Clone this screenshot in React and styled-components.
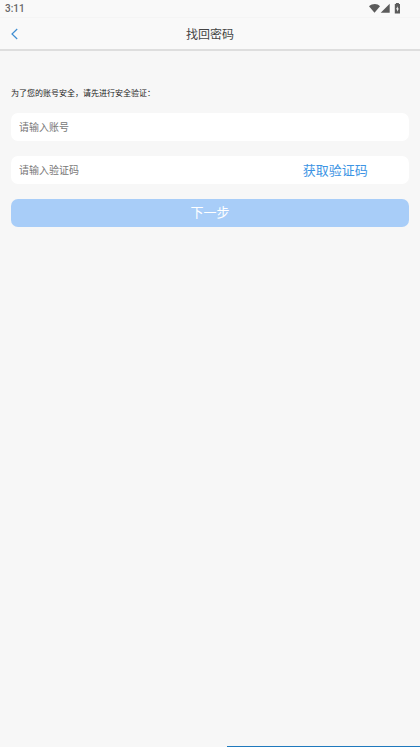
import React from "react";
import styled, { createGlobalStyle } from "styled-components";

const GlobalStyle = createGlobalStyle`
  *, *::before, *::after { box-sizing: border-box; }
  body {
    margin: 0;
    background: #f7f7f7;
    color: #222;
    font-family: "Noto Sans CJK SC", sans-serif;
  }
  button, input { font-family: inherit; font-weight: 400; }
`;

const Page = styled.div`
  display: flex;
  flex-direction: column;
  min-height: 100vh;
`;

const StatusBar = styled.div`
  display: flex;
  align-items: center;
  justify-content: space-between;
  height: 18px;
  padding: 0 19px 0 5px;
  background: #f9f9f9;
  border-bottom: 1px solid #f5f5f5;
  color: #666;
  font: 500 10px/16px Roboto, sans-serif;
`;

const StatusIcons = styled.div`
  display: flex;
  align-items: center;
`;

const Header = styled.header`
  display: grid;
  grid-template-columns: 28px 1fr 28px;
  align-items: center;
  height: 33px;
  background: #f9f9f9;
  border-bottom: 2px solid #dedede;
`;

const BackButton = styled.button`
  display: flex;
  align-items: center;
  justify-content: flex-end;
  height: 31px;
  padding: 0 10px 0 0;
  border: 0;
  background: none;
  color: #3f8ed2;
`;

const Title = styled.h1`
  margin: 0;
  color: #444;
  font-size: 12px;
  font-weight: 400;
  line-height: 18px;
  text-align: center;
`;

const Form = styled.form`
  display: flex;
  flex-direction: column;
  gap: 15px;
  padding: 37px 11px 0;
`;

const Notice = styled.p`
  margin: 0;
  color: #222;
  font-size: 8px;
  line-height: 10px;
`;

const Field = styled.div`
  display: flex;
  height: 28px;
  border-radius: 7px;
  background: #fff;
  overflow: hidden;
`;

const TextInput = styled.input`
  flex: 1;
  min-width: 0;
  padding: 0 8px 2px;
  border: 0;
  outline: 0;
  background: none;
  color: #333;
  font-size: 10px;
  &::placeholder { color: #777; opacity: 1; }
`;

const CodeButton = styled.button`
  width: 37%;
  padding: 0;
  border: 0;
  background: none;
  color: #3c94e4;
  font-size: 13px;
  line-height: 18px;
`;

const SubmitButton = styled.button`
  height: 28px;
  padding: 0 0 2px;
  border: 0;
  border-radius: 7px;
  background: #a8cdf8;
  color: #fff;
  font-size: 13px;
  line-height: 18px;
`;

const BottomLine = styled.div`
  width: 46%;
  height: 1px;
  margin-top: auto;
  margin-left: auto;
  background: #1f79bd;
`;

export default function App() {
  return (
    <>
      <GlobalStyle />
      <Page lang="zh-CN">
        <StatusBar>
          <span>3:11</span>
          <StatusIcons>
            <svg width="32" height="11" viewBox="0 0 32 11" fill="#5b5b5b" aria-hidden="true">
              <path d="M0 3.3C3.1.6 8-.1 11 3.3L5.5 9.7Z" />
              <path d="M20.7.7V9.7H11.7Z" />
              <path d="M26.9 1V0h3v1H31v9.6h-5.2V1Z" />
              <path d="M28.8 3.2L27 6.3h1.1v2.4l1.8-3.2h-1.1Z" fill="#f9f9f9" />
            </svg>
          </StatusIcons>
        </StatusBar>
        <Header>
          <BackButton type="button" aria-label="返回">
            <svg width="7" height="12" viewBox="0 0 7 12" fill="none" stroke="currentColor" strokeWidth="1.2" aria-hidden="true">
              <path d="M6.2 1L1 6l5.2 5" />
            </svg>
          </BackButton>
          <Title>找回密码</Title>
        </Header>
        <Form onSubmit={(event) => event.preventDefault()}>
          <Notice>为了您的账号安全，请先进行安全验证：</Notice>
          <Field>
            <TextInput aria-label="账号" placeholder="请输入账号" />
          </Field>
          <Field>
            <TextInput aria-label="验证码" placeholder="请输入验证码" />
            <CodeButton type="button">获取验证码</CodeButton>
          </Field>
          <SubmitButton type="submit">下一步</SubmitButton>
        </Form>
        <BottomLine />
      </Page>
    </>
  );
}
